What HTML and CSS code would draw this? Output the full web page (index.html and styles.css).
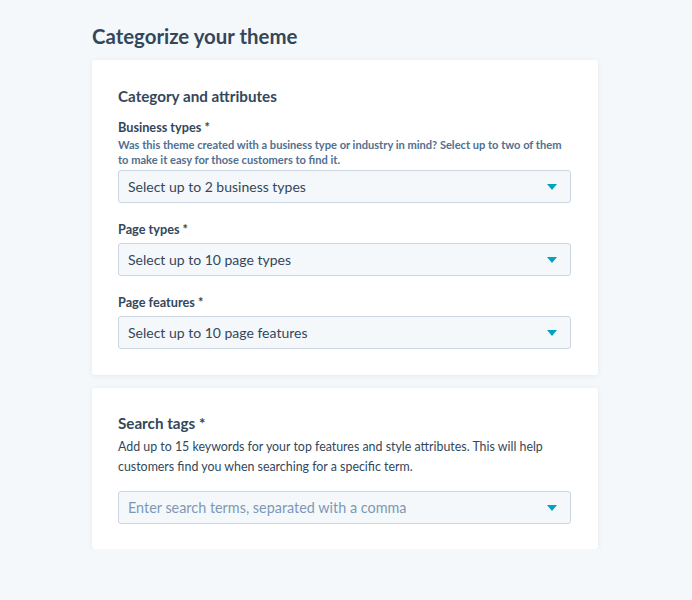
FILE: index.html
```html
<!DOCTYPE html>
<html>
<head>
<meta charset="utf-8">
<link rel="stylesheet" href="styles.css">
</head>
<body>
<main class="page">
  <h1 class="title">Categorize your theme</h1>
  <section class="card card-first">
    <h2 class="card-title">Category and attributes</h2>
    <div class="field">
      <div class="label">Business types *</div>
      <div class="help">Was this theme created with a business type or industry in mind? Select up to two of them to make it easy for those customers to find it.</div>
      <div class="select"><span class="value">Select up to 2 business types</span><span class="caret"></span></div>
    </div>
    <div class="field">
      <div class="label">Page types *</div>
      <div class="select"><span class="value">Select up to 10 page types</span><span class="caret"></span></div>
    </div>
    <div class="field">
      <div class="label">Page features *</div>
      <div class="select"><span class="value">Select up to 10 page features</span><span class="caret"></span></div>
    </div>
  </section>
  <section class="card card-second">
    <h2 class="card-title">Search tags *</h2>
    <p class="desc">Add up to 15 keywords for your top features and style attributes. This will help customers find you when searching for a specific term.</p>
    <div class="select"><span class="value placeholder">Enter search terms, separated with a comma</span><span class="caret"></span></div>
  </section>
</main>
</body>
</html>
```

FILE: styles.css
```css
html, body {
  margin: 0;
  padding: 0;
  background: #f5f8fa;
}
body {
  font-family: "Lato", "Open Sans", sans-serif;
  color: #33475b;
}
.page {
  width: 506px;
  margin-left: 92px;
  padding-top: 22px;
}
.title {
  margin: 0 0 10px;
  font-size: 20.4px;
  line-height: 28px;
  font-weight: 700;
  color: #33475b;
}
.card {
  background: #fff;
  border-radius: 3px;
  box-shadow: 0 1px 5px rgba(45, 62, 80, 0.08);
  padding: 26px 27px 26px 26px;
}
.card-second {
  margin-top: 13px;
  padding-top: 25px;
  padding-bottom: 25px;
}
.card-title {
  margin: 0;
  font-size: 15.2px;
  line-height: 20px;
  font-weight: 700;
}
.card-first .card-title {
  margin-bottom: 12px;
}
.field + .field {
  margin-top: 17px;
}
.label {
  font-size: 12.7px;
  line-height: 18px;
  font-weight: 700;
  margin-bottom: 5px;
}
.help {
  font-size: 11.1px;
  line-height: 15px;
  font-weight: 700;
  color: #516f90;
  margin-top: -4px;
  margin-bottom: 3px;
}
.desc {
  margin: 4px 0 14px;
  font-size: 12.4px;
  line-height: 20px;
  color: #33475b;
}
.select {
  display: flex;
  align-items: center;
  justify-content: space-between;
  height: 31px;
  border: 1px solid #cbd6e2;
  border-radius: 3px;
  background: #f5f8fa;
  padding: 0 13px 0 9px;
}
.value {
  font-size: 14px;
  color: #33475b;
}
.value.placeholder {
  font-size: 14.4px;
  color: #7c98b6;
}
.caret {
  width: 0;
  height: 0;
  border-left: 5px solid transparent;
  border-right: 5px solid transparent;
  border-top: 6px solid #00a4bd;
}
```
